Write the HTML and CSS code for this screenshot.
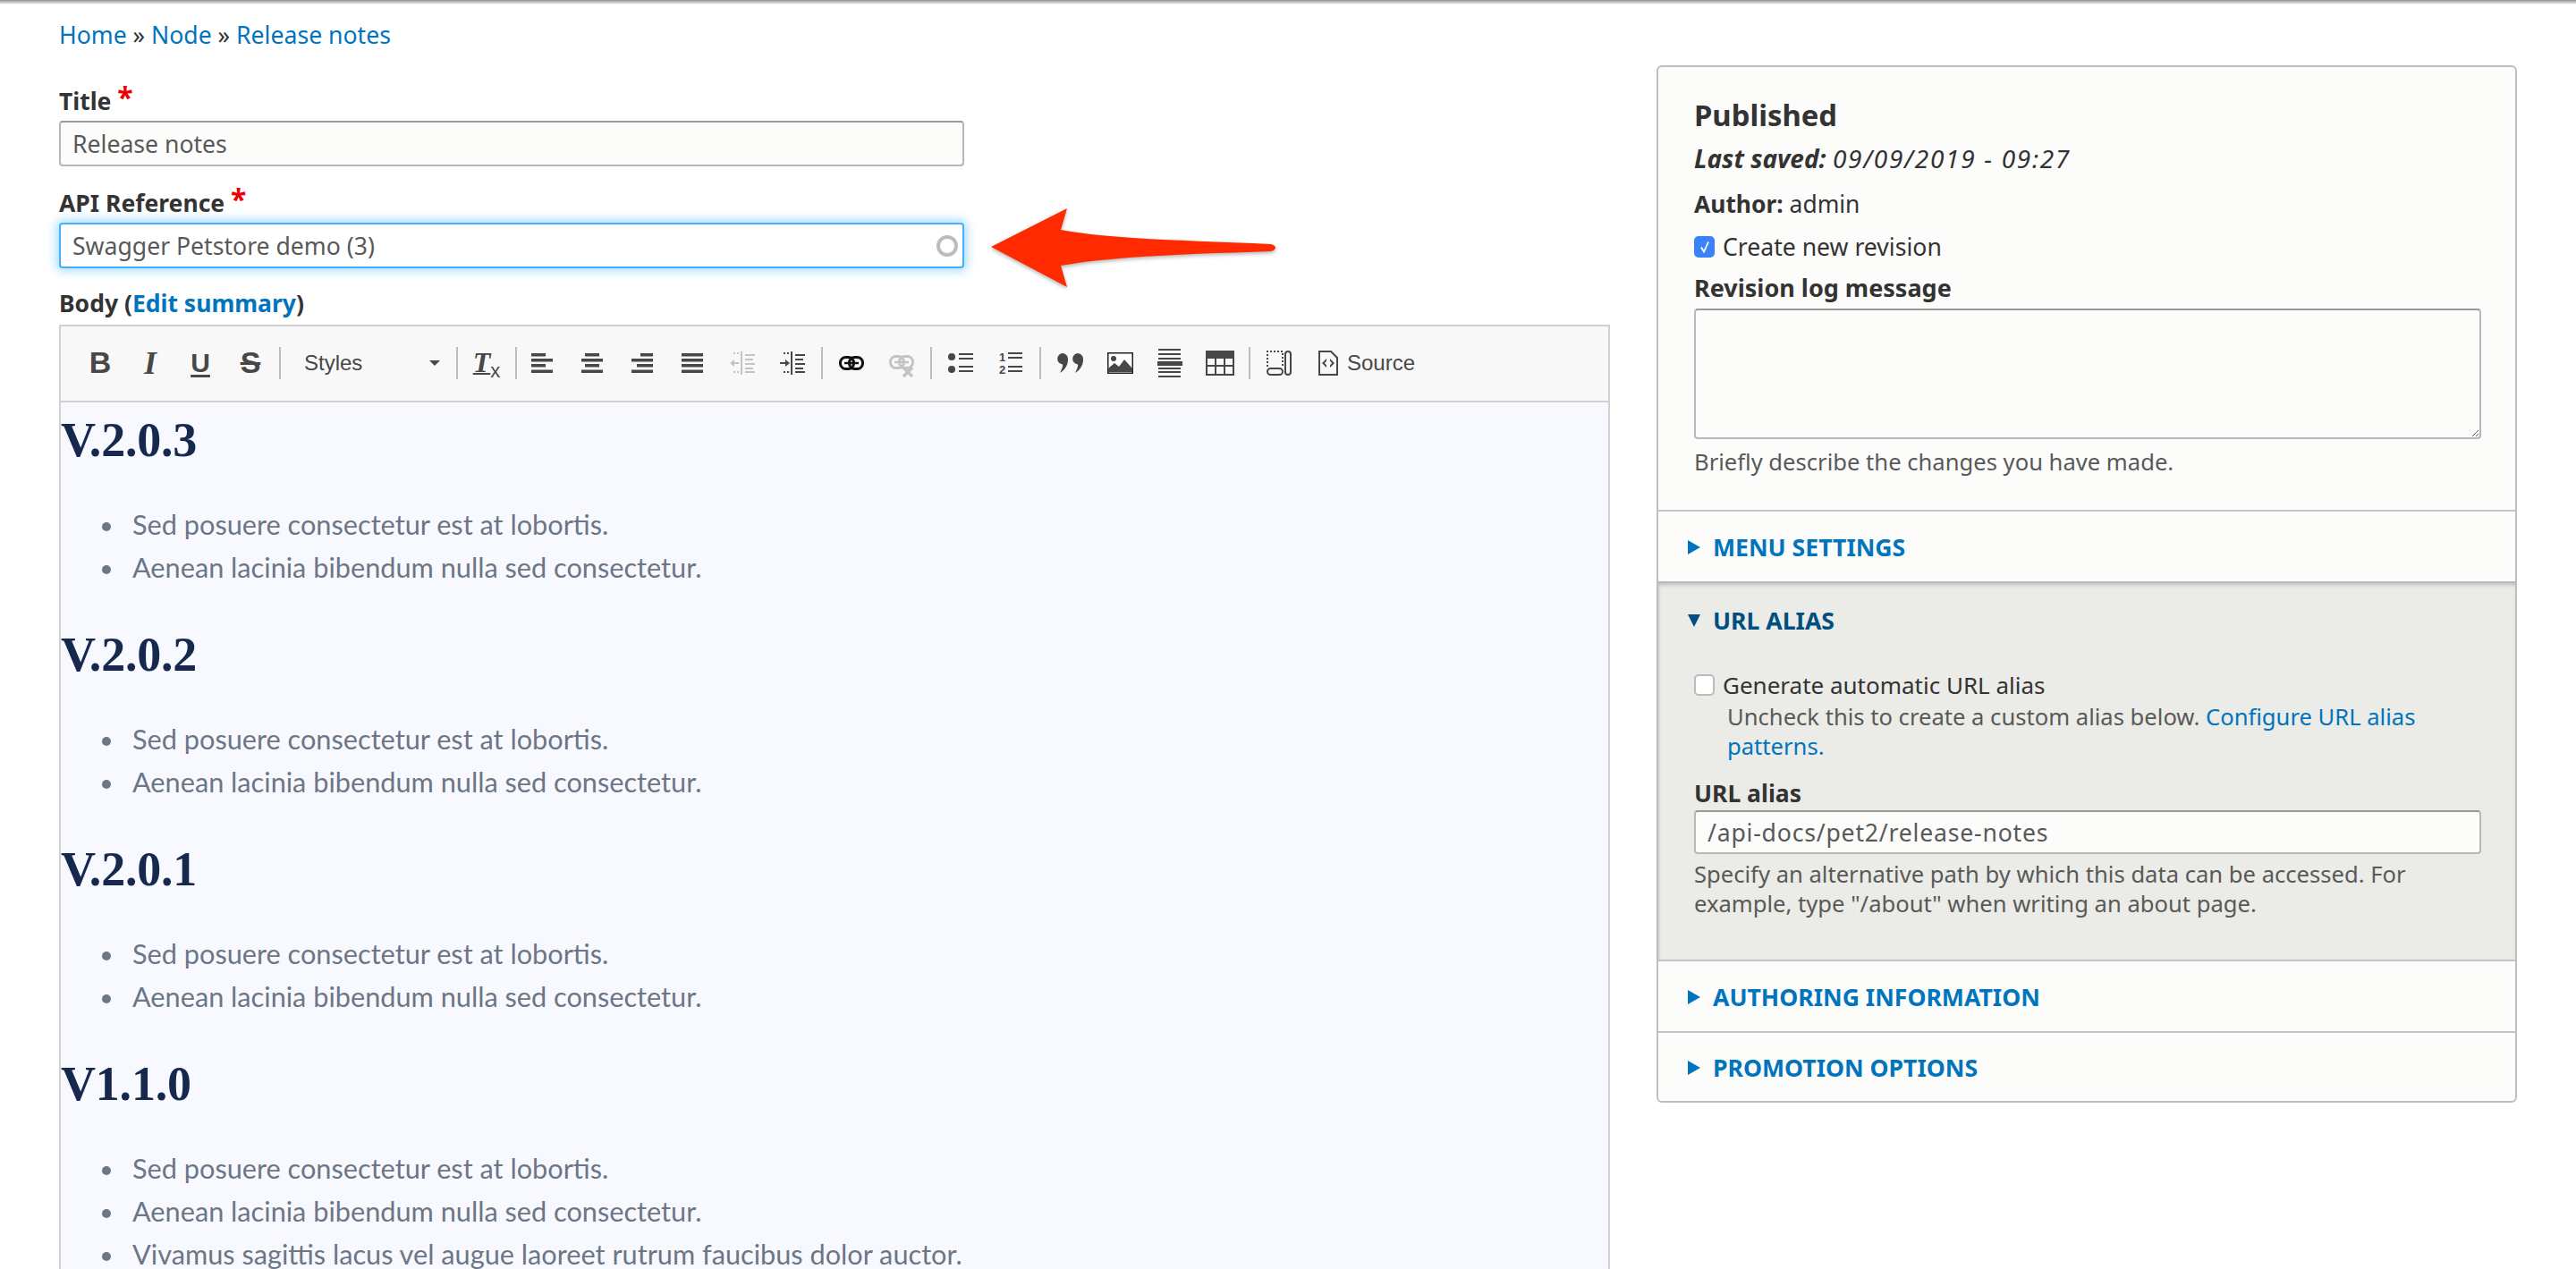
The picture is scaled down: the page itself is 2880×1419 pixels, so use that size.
FILE: index.html
```html
<!DOCTYPE html>
<html lang="en">
<head>
<meta charset="utf-8">
<title>Release notes</title>
<link rel="stylesheet" href="styles.css">
</head>
<body>
<div class="topshade"></div>
<div class="page">
  <nav class="crumbs"><a href="#">Home</a> » <a href="#">Node</a> » <a href="#">Release notes</a></nav>
  <div class="columns">
    <main class="form">
      <label class="label label-title">Title <span class="req">*</span></label>
      <input class="text" type="text" value="Release notes">
      <label class="label label-api">API Reference <span class="req">*</span></label>
      <div class="auto">
        <input class="text focus" type="text" value="Swagger Petstore demo (3)">
        <span class="spinner"></span>
      </div>
      <label class="label label-body">Body (<a href="#">Edit summary</a>)</label>
      <div class="editor">
        <div class="toolbar">
          <span class="btn t-b">B</span><span class="btn t-i">I</span><span class="btn t-u">U</span><span class="btn t-s">S</span>
          <span class="sep"></span>
          <span class="combo">Styles<span class="caret"></span></span>
          <span class="sep"></span>
          <span class="btn t-tx"><span class="tx-t">T</span><span class="tx-x">x</span></span>
          <span class="sep"></span>
          <span class="align-group">
            <span class="btn"><svg width="24" height="22" viewBox="0 0 24 22"><path class="ink" d="M0 0h16v3.5H0zM0 6h24v3.5H0zM0 12h16v3.5H0zM0 18.500h24V22H0z"/></svg></span>
            <span class="btn"><svg width="24" height="22" viewBox="0 0 24 22"><path class="ink" d="M4 0h16v3.5H4zM0 6h24v3.5H0zM4 12h16v3.5H4zM0 18.500h24V22H0z"/></svg></span>
            <span class="btn"><svg width="24" height="22" viewBox="0 0 24 22"><path class="ink" d="M10 0h14v3.5H10zM0 6h24v3.5H0zM6 12h18v3.5H6zM0 18.500h24V22H0z"/></svg></span>
            <span class="btn"><svg width="24" height="22" viewBox="0 0 24 22"><path class="ink" d="M0 0h24v3.5H0zM0 6h24v3.500H0zM0 12h24v3.5H0zM0 18.500h24V22H0z"/></svg></span>
            <span class="btn"><svg width="28" height="26" viewBox="0 0 28 26"><path class="mute" d="M12 0h2v26h-2zM17 3h11v2H17zM17 8h9v2H17zM17 13h11v2H17zM17 18h9v2H17zM17 22h11v2H17zM8 1h2v2H8zM4 1h2v2H4zM8 22h2v2H8zM4 22h2v2H4zM5 12h5v2H5zM0 13l5-4v8z"/></svg></span>
            <span class="btn"><svg width="28" height="26" viewBox="0 0 28 26"><path class="ink" d="M12 0h2v26h-2zM17 3h11v2H17zM17 8h9v2H17zM17 13h11v2H17zM17 18h9v2H17zM17 22h11v2H17zM8 1h2v2H8zM4 1h2v2H4zM8 22h2v2H8zM4 22h2v2H4zM0 12h6v2H0zM11 13l-5-4v8z"/></svg></span>
          </span>
          <span class="sep"></span>
          <span class="btn"><svg width="28" height="16" viewBox="0 0 28 16"><g class="chain"><rect x="1.500" y="1.500" width="15" height="13" rx="6"/><rect x="11.500" y="1.500" width="15" height="13" rx="6"/></g><path class="ink-strong" d="M6 6.800h16v2.400H6z"/></svg></span>
          <span class="btn"><svg width="28" height="26" viewBox="0 0 28 26" class="down"><g class="chain chain-mute"><rect x="1.500" y="1.500" width="15" height="13" rx="6"/><rect x="11.500" y="1.500" width="15" height="13" rx="6"/></g><path class="mute" d="M6 6.800h16v2.400H6z"/><path class="x-mute" d="M16 14l10 10M26 14L16 24"/></svg></span>
          <span class="sep"></span>
          <span class="btn"><svg width="28" height="24" viewBox="0 0 28 24"><circle class="ink" cx="4" cy="5" r="4"/><circle class="ink" cx="4" cy="19" r="4"/><path class="ink" d="M12 1h16v2H12zM12 6h16v2H12zM12 15h16v2H12zM12 20h16v2H12z"/></svg></span>
          <span class="btn"><svg width="26" height="26" viewBox="0 0 26 26"><text class="num" x="0" y="11">1</text><text class="num" x="0" y="25">2</text><path class="ink" d="M10 1h16v2H10zM10 6h16v2H10zM10 16h16v2H10zM10 21h16v2H10z"/></svg></span>
          <span class="sep"></span>
          <span class="btn"><svg width="30" height="22" viewBox="0 0 30 22"><path class="ink" d="M6.500 0a6.500 6.500 0 0 1 6.500 7c0 7-4 12-9 15 2-4 3.500-7 3-9.500A6.300 6.300 0 0 1 6.500 0zM23.500 0a6.500 6.500 0 0 1 6.500 7c0 7-4 12-9 15 2-4 3.500-7 3-9.500a6.300 6.300 0 0 1-.5-12.500z"/></svg></span>
          <span class="btn"><svg width="29" height="24" viewBox="0 0 29 24"><path fill="#fff" d="M0 0h29v24H0z"/><path fill="none" stroke="#222" stroke-width="1.500" d="M.75.75h27.500v22.500H.75z"/><circle class="ink" cx="7" cy="7" r="3"/><path class="ink" d="M1 22v-4l7-6 5 4 6-8 9 10v4z"/></svg></span>
          <span class="btn"><svg width="28" height="32" viewBox="0 0 28 32"><path class="ink" d="M1 0h25v2H1zM1 5h25v2H1zM1 10h25v2H1zM0 14h28v5H0zM1 21h25v2H1zM1 25h25v2H1zM1 30h25v2H1z"/></svg></span>
          <span class="btn"><svg width="32" height="28" viewBox="0 0 32 28"><path class="ink" d="M0 0h32v28H0zM2 9v7h8V9zm10 0v7h8V9zm10 0v7h8V9zM2 18v8h8v-8zm10 0v8h8v-8zm10 0v8h8v-8z" fill-rule="evenodd"/></svg></span>
          <span class="sep"></span>
          <span class="btn"><svg width="28" height="28" viewBox="0 0 28 28"><path fill="none" stroke="#474747" stroke-width="2" stroke-dasharray="2 2" d="M1 18V1h17v17"/><rect class="stroke" x="1" y="20" width="17" height="7" rx="3.500"/><rect class="stroke" x="21" y="1" width="6" height="26" rx="3"/></svg></span>
          <span class="source"><svg width="22" height="28" viewBox="0 0 22 28"><path fill="none" stroke="#474747" stroke-width="2" d="M1 1h13l7 7v19H1z"/><path class="ink" d="M9 9l-5 5 5 5v-2.800L6.800 14 9 11.800zM13 9l5 5-5 5v-2.800l2.200-2.200-2.200-2.200z"/></svg><span class="source-text">Source</span></span>
        </div>
        <div class="content">
          <section class="note"><h2>V.2.0.3</h2><ul><li>Sed posuere consectetur est at lobortis.</li><li>Aenean lacinia bibendum nulla sed consectetur.</li></ul></section>
          <section class="note"><h2>V.2.0.2</h2><ul><li>Sed posuere consectetur est at lobortis.</li><li>Aenean lacinia bibendum nulla sed consectetur.</li></ul></section>
          <section class="note"><h2>V.2.0.1</h2><ul><li>Sed posuere consectetur est at lobortis.</li><li>Aenean lacinia bibendum nulla sed consectetur.</li></ul></section>
          <section class="note"><h2>V1.1.0</h2><ul><li>Sed posuere consectetur est at lobortis.</li><li>Aenean lacinia bibendum nulla sed consectetur.</li><li>Vivamus sagittis lacus vel augue laoreet rutrum faucibus dolor auctor.</li></ul></section>
        </div>
      </div>
    </main>
    <aside class="panel">
      <div class="meta">
        <h3 class="status">Published</h3>
        <p class="saved"><b>Last saved:</b> <span class="date">09/09/2019 - 09:27</span></p>
        <p class="author"><b>Author:</b> admin</p>
        <div class="check-row"><span class="box checked"><svg width="14" height="18" viewBox="0 0 14 18"><path d="M3 9.500l3 5 5-11" fill="none" stroke="#fff" stroke-width="1.800"/></svg></span>Create new revision</div>
        <label class="label label-log">Revision log message</label>
        <textarea class="log"></textarea>
        <p class="hint hint-log">Briefly describe the changes you have made.</p>
      </div>
      <div class="fold"><span class="tri"></span>MENU SETTINGS</div>
      <div class="open">
        <div class="fold fold-open"><span class="tri tri-down"></span>URL ALIAS</div>
        <div class="open-body">
          <div class="check-row check-row-alias"><span class="box"></span>Generate automatic URL alias</div>
          <p class="hint hint-indent">Uncheck this to create a custom alias below. <a href="#">Configure URL alias patterns.</a></p>
          <label class="label label-alias">URL alias</label>
          <input class="text alias" type="text" value="/api-docs/pet2/release-notes">
          <p class="hint hint-alias">Specify an alternative path by which this data can be accessed. For example, type "/about" when writing an about page.</p>
        </div>
      </div>
      <div class="fold fold-line"><span class="tri"></span>AUTHORING INFORMATION</div>
      <div class="fold fold-line fold-last"><span class="tri"></span>PROMOTION OPTIONS</div>
    </aside>
  </div>
  <svg class="arrow" width="330" height="100" viewBox="0 0 330 100"><path d="M4 47L89 4l-7 24c60 11 150 12 234 16 8 1 8 7 0 8-84 3-174 5-234 16l7 24z" fill="#ff2a00"/></svg>
</div>
</body>
</html>
```
FILE: styles.css
```css
* { box-sizing: border-box; }
html, body { margin: 0; height: 100%; overflow: hidden; background: #fff; }
body { font-family: "Noto Sans", "Open Sans", sans-serif; font-size: 26px; color: #333; }
a { color: #0074bd; text-decoration: none; }
p { margin: 0; }

.topshade { height: 5px; background: linear-gradient(#8f8f8f, #cfcfcf 60%, #fff); }
.page { position: relative; padding: 14px 66px 0; height: calc(100vh - 5px); overflow: hidden; }
.crumbs { height: 40px; line-height: 40px; font-size: 26.6px; color: #333; }
.columns { margin-top: 14px; display: grid; grid-template-columns: 1fr 962px; column-gap: 52px; align-items: start; }

.label { display: block; font-weight: 700; font-size: 26.5px; line-height: 34px; color: #333; }
.label-title { margin-top: 23px; margin-bottom: 5px; }
.label-api { margin-top: 24px; margin-bottom: 5px; }
.label-body { margin-top: 22px; margin-bottom: 7px; }
.label-log { margin-top: 11px; margin-bottom: 6px; font-size: 27px; }
.label-alias { margin-top: 19px; margin-bottom: 2px; }
.req { color: #e00; font-size: 32px; line-height: 20px; vertical-align: 2px; }

.text { display: block; width: 1012px; height: 51px; padding: 0 13px; border: 2px solid #b8b8b8; border-top-color: #999; border-radius: 4px; background: #fcfcfa; font: 26.6px "Noto Sans", sans-serif; color: #595959; outline: none; }
.focus { background: #fff; border-color: #40b0ff; box-shadow: 0 0 12px 3px #a5dcff; }
.auto { position: relative; width: 1012px; }
.spinner { position: absolute; right: 7px; top: 14px; width: 24px; height: 24px; border: 4px solid #bcbcbc; border-radius: 50%; }

.editor { border: 2px solid #d1d1d1; border-bottom: 0; height: 1100px; }
.toolbar { height: 85px; display: flex; align-items: center; padding: 0 0 2px 16px; background: #f8f8f8; border-bottom: 2px solid #d1d1d1; color: #474747; }
.btn { flex: none; width: 56px; height: 40px; display: flex; align-items: center; justify-content: center; }
.t-b, .t-i, .t-u, .t-s { font: 700 34px "Liberation Sans", sans-serif; }
.t-i { font: italic 700 36px "Liberation Serif", serif; }
.t-u { text-decoration: underline; font-size: 30px; text-underline-offset: 3px; }
.t-s { text-decoration: line-through; }
.tx-t { font: italic 700 32px "Liberation Serif", serif; text-decoration: underline; text-decoration-thickness: 2px; text-underline-offset: 1px; }
.tx-x { font: 22px "Liberation Sans", sans-serif; align-self: flex-end; line-height: 18px; margin-bottom: 2px; }
.sep { flex: none; width: 2px; height: 36px; margin: 0 4px; background: #bcbcbc; }
.combo { flex: none; width: 188px; display: flex; align-items: center; justify-content: space-between; padding: 0 14px 0 22px; font: 24px "Liberation Sans", sans-serif; }
.caret { width: 0; height: 0; border: 6px solid transparent; border-top: 6px solid #474747; border-bottom: 0; }
.align-group { display: flex; margin-left: -4px; }
.source { display: flex; align-items: center; gap: 10px; margin-left: 16px; font: 24px "Liberation Sans", sans-serif; }
.ink { fill: #474747; }
.ink-strong { fill: #111; }
.mute { fill: #c4c4c4; }
.chain rect { fill: none; stroke: #111; stroke-width: 3; }
.chain-mute rect { stroke: #c4c4c4; }
.x-mute { stroke: #c4c4c4; stroke-width: 3.5; fill: none; }
.down { margin-top: 8px; }
.stroke { fill: none; stroke: #474747; stroke-width: 2; }
.num { font: 700 13px "Liberation Sans", sans-serif; fill: #474747; }

.content { background: #f8f9fe; padding-top: 10px; height: 1020px; }
.note h2 { margin: 0; height: 64px; font: 700 54px/64px "Liberation Serif", serif; letter-spacing: -.2px; color: #17284f; }
.note ul { margin: 39px 0 41px; padding-left: 80px; list-style: none; }
.note li { font: 400 30.7px/48px Lato, sans-serif; color: #6c7686; }
.note li::before { content: ""; display: inline-block; width: 10px; height: 10px; margin-left: -34px; margin-right: 24px; border-radius: 50%; background: #6c7686; vertical-align: 4px; }

.panel { border: 2px solid #bebebe; border-radius: 6px; background: #fcfcfa; }
.meta { padding: 34px 38px 37px 40px; }
.status { margin: 0; font-size: 32.8px; line-height: 40px; font-weight: 700; color: #333; }
.saved { margin-top: 10px; line-height: 36px; font-size: 28px; font-style: italic; }
.date { letter-spacing: 1.7px; }
.author { margin-top: 15px; line-height: 36px; font-size: 26.4px; }
.check-row { display: flex; align-items: center; gap: 9px; margin-top: 12px; height: 36px; font-size: 26.6px; }
.box { flex: none; width: 23px; height: 24px; border-radius: 5px; background: #fff; border: 2px solid #bbb; display: flex; align-items: center; justify-content: center; }
.checked { background: #3b82f6; border: 0; }
.log { display: block; width: 880px; height: 146px; border: 2px solid #b8b8b8; border-top-color: #999; border-radius: 4px; background: #fcfcfa; outline: none; resize: vertical; }
.hint { font-size: 25.6px; line-height: 33px; color: #595959; }
.hint-log { margin-top: 9px; }
.fold { display: flex; align-items: center; height: 80px; padding: 2px 0 0 33px; border-top: 2px solid #c4c4c4; color: #0074bd; font-size: 26.6px; font-weight: 700; }
.tri { width: 0; height: 0; margin-right: 14px; border-left: 14px solid currentColor; border-top: 8px solid transparent; border-bottom: 8px solid transparent; }
.tri-down { border-top: 14px solid currentColor; border-left: 7px solid transparent; border-right: 7px solid transparent; border-bottom: 0; }
.open { background: #ebebe7; box-shadow: inset 0 4px 4px -2px #bbb, inset 3px 0 3px -2px #ccc; border-top: 2px solid #bbb; height: 423px; }
.fold-open { border: 0; color: #004f80; height: 82px; }
.open-body { padding: 0 38px 0 40px; }
.check-row-alias { margin-top: 15px; height: 34px; font-size: 26px; }
.hint-indent { margin: 2px 30px 0 37px; }
.alias { width: 880px; height: 49px; background: #fcfcfa; font-size: 26.6px; letter-spacing: .8px; }
.hint-alias { margin-top: 6px; }
.fold-line { height: 80px; }
.fold-last { height: 78px; }

.arrow { position: absolute; left: 1104px; top: 224px; filter: drop-shadow(0 2px 2px rgba(0,0,0,.3)); }
```
